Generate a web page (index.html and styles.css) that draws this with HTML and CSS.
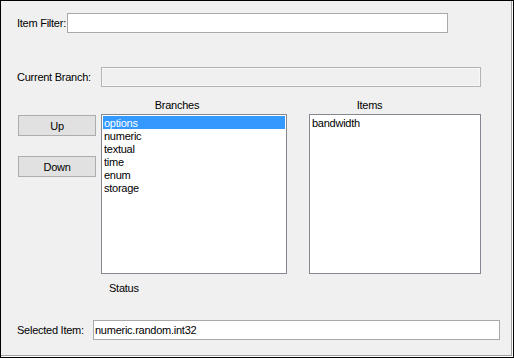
FILE: index.html
```
<!DOCTYPE html>
<html>
<head>
<meta charset="utf-8">
<link rel="stylesheet" href="styles.css">
</head>
<body>
<div class="frame">
  <div class="panel">
    <div class="row row-filter">
      <span class="label label-filter">Item Filter:</span>
      <div class="textbox tb-filter"></div>
    </div>
    <div class="row row-branch">
      <span class="label label-branch">Current Branch:</span>
      <div class="textbox tb-branch disabled"></div>
    </div>
    <div class="main">
      <div class="heading heading-branches">Branches</div>
      <div class="heading heading-items">Items</div>
      <div class="buttons">
        <div class="button">Up</div>
        <div class="button">Down</div>
      </div>
      <div class="listbox lb-branches">
        <div class="item selected">options</div>
        <div class="item">numeric</div>
        <div class="item">textual</div>
        <div class="item">time</div>
        <div class="item">enum</div>
        <div class="item">storage</div>
      </div>
      <div class="listbox lb-items">
        <div class="item">bandwidth</div>
      </div>
    </div>
    <div class="status">Status</div>
    <div class="row row-selected">
      <span class="label label-selected">Selected Item:</span>
      <div class="textbox tb-selected">numeric.random.int32</div>
    </div>
  </div>
</div>
</body>
</html>
```

FILE: styles.css
```
* { box-sizing: border-box; }
html, body { margin: 0; padding: 0; }
body {
  width: 514px;
  height: 358px;
  font-family: "Liberation Sans", Arial, sans-serif;
  font-size: 11px;
  letter-spacing: -0.25px;
  color: #000;
}
.frame {
  width: 514px;
  height: 358px;
  border: 1px solid #000;
  background: #ffffff;
  padding: 0 1px 1px 0;
}
.panel {
  width: 100%;
  height: 100%;
  background: #f0f0f0;
  border-right: 1px solid #a0a0a0;
  border-bottom: 1px solid #a0a0a0;
  display: flex;
  flex-direction: column;
}
.row {
  display: flex;
  align-items: center;
  height: 20px;
  padding-left: 16px;
}
.row-filter { margin-top: 12px; }
.row-branch { margin-top: 34px; }
.row-selected { margin-top: 25px; }
.label { flex: none; white-space: nowrap; line-height: 13px; }
.label-filter { width: 50px; }
.label-branch { width: 84px; }
.label-selected { width: 76px; }
.textbox {
  height: 20px;
  border: 1px solid #a9a9a9;
  background: #fff;
  line-height: 18px;
  padding-left: 1px;
  white-space: nowrap;
}
.tb-filter { width: 381px; }
.tb-branch { width: 380px; }
.tb-selected { width: 407px; }
.disabled { background: #f0f0f0; border-color: #b4b4b4; box-shadow: inset 0 0 0 1px #f7f7f7; }
.main {
  margin-top: 12px;
  padding-left: 17px;
  display: grid;
  grid-template-columns: 78px 186px 172px;
  grid-template-rows: 13px 160px;
  column-gap: 5px;
  row-gap: 2px;
}
.main > .lb-items { margin-left: 17px; }
.heading {
  line-height: 13px;
  text-align: center;
  padding-right: 34px;
}
.heading-branches { grid-column: 2; grid-row: 1; }
.heading-items { grid-column: 3; grid-row: 1; margin-left: 17px; padding-right: 34px; }
.buttons {
  grid-column: 1;
  grid-row: 2;
  display: flex;
  flex-direction: column;
  gap: 20px;
  padding-top: 1px;
}
.button {
  height: 21px;
  border: 1px solid #adadad;
  background: #e1e1e1;
  text-align: center;
  line-height: 20px;
}
.listbox {
  grid-row: 2;
  border: 1px solid #828790;
  background: #fff;
  padding: 1px;
}
.lb-branches { grid-column: 2; }
.lb-items { grid-column: 3; width: 172px; }
.item {
  height: 13px;
  line-height: 14px;
  padding-left: 1px;
  white-space: nowrap;
}
.selected { background: #3399ff; color: #fff; }
.status {
  margin-top: 8px;
  padding-left: 108px;
  line-height: 13px;
}
```
